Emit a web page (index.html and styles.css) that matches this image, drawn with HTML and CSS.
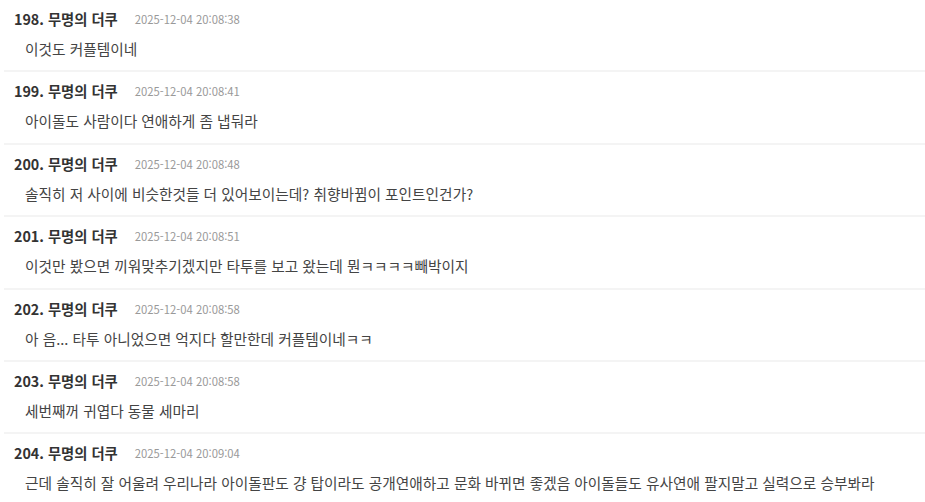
FILE: index.html
```html
<!DOCTYPE html>
<html lang="ko">
<head>
<meta charset="utf-8">
<link rel="stylesheet" href="styles.css">
</head>
<body>
<ul class="comments">
  <li class="comment">
    <div class="meta"><span class="author">198. 무명의 더쿠</span><span class="date">2025-12-04 20:08:38</span></div>
    <div class="text">이것도 커플템이네</div>
  </li>
  <li class="comment">
    <div class="meta"><span class="author">199. 무명의 더쿠</span><span class="date">2025-12-04 20:08:41</span></div>
    <div class="text">아이돌도 사람이다 연애하게 좀 냅둬라</div>
  </li>
  <li class="comment">
    <div class="meta"><span class="author">200. 무명의 더쿠</span><span class="date">2025-12-04 20:08:48</span></div>
    <div class="text">솔직히 저 사이에 비슷한것들 더 있어보이는데? 취향바뀜이 포인트인건가?</div>
  </li>
  <li class="comment">
    <div class="meta"><span class="author">201. 무명의 더쿠</span><span class="date">2025-12-04 20:08:51</span></div>
    <div class="text">이것만 봤으면 끼워맞추기겠지만 타투를 보고 왔는데 뭔ㅋㅋㅋㅋ빼박이지</div>
  </li>
  <li class="comment">
    <div class="meta"><span class="author">202. 무명의 더쿠</span><span class="date">2025-12-04 20:08:58</span></div>
    <div class="text">아 음... 타투 아니었으면 억지다 할만한데 커플템이네ㅋㅋ</div>
  </li>
  <li class="comment">
    <div class="meta"><span class="author">203. 무명의 더쿠</span><span class="date">2025-12-04 20:08:58</span></div>
    <div class="text">세번째꺼 귀엽다 동물 세마리</div>
  </li>
  <li class="comment">
    <div class="meta"><span class="author">204. 무명의 더쿠</span><span class="date">2025-12-04 20:09:04</span></div>
    <div class="text">근데 솔직히 잘 어울려 우리나라 아이돌판도 걍 탑이라도 공개연애하고 문화 바뀌면 좋겠음 아이돌들도 유사연애 팔지말고 실력으로 승부봐라</div>
  </li>
</ul>
</body>
</html>
```
FILE: styles.css
```css
html, body {
  margin: 0;
  padding: 0;
  background: #ffffff;
}
body {
  font-family: "Noto Sans CJK KR", "Noto Sans", sans-serif;
  color: #444;
}
.comments {
  list-style: none;
  margin: 0 0 0 4px;
  padding: 0;
}
.comment {
  padding: 9px 0 11.4px 10px;
  border-bottom: 2px solid #f4f4f4;
  display: flex;
  flex-direction: column;
  gap: 10px;
}
.meta {
  display: flex;
  align-items: center;
  gap: 17px;
  height: 20px;
}
.author {
  font-size: 14.3px;
  font-weight: 700;
  color: #333;
  line-height: 20px;
}
.date {
  font-size: 11.3px;
  color: #999;
  line-height: 20px;
}
.text {
  padding-left: 11px;
  font-size: 14.7px;
  line-height: 20px;
  color: #444;
  white-space: nowrap;
}
```
